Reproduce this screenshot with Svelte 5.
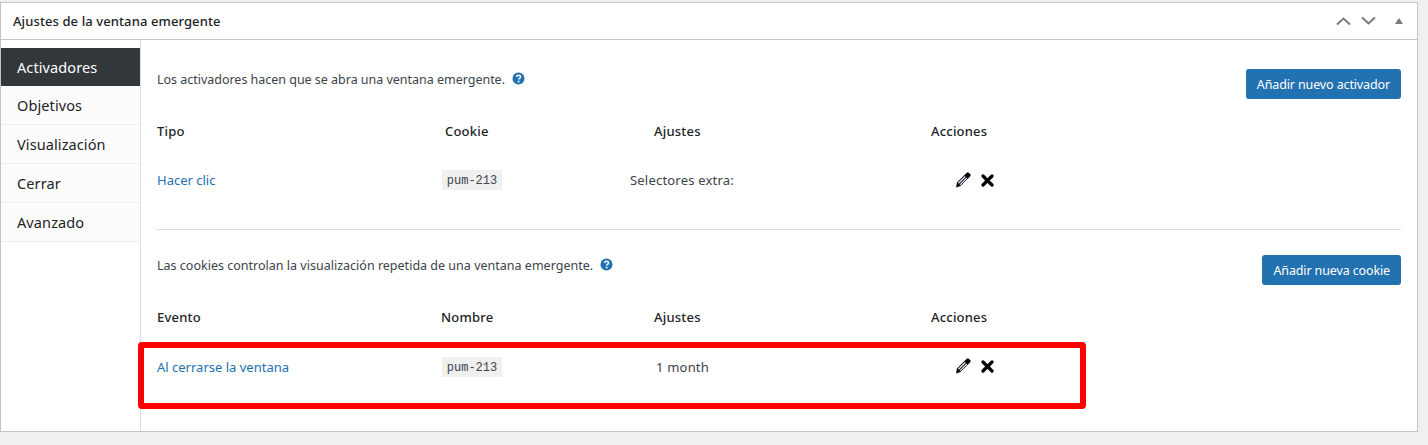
<script>
  const tabs = ['Activadores', 'Objetivos', 'Visualización', 'Cerrar', 'Avanzado']
</script>

{#snippet help()}
  <svg class="help" width="13" height="13" viewBox="0 0 13 13"><circle cx="6.500" cy="6.500" r="6" fill="#2271b1"/><path d="M4.500 5.100c0-1.200.9-1.900 2-1.900s2 .7 2 1.700c0 1.400-1.800 1.400-1.800 2.600" fill="none" stroke="#fff" stroke-width="1.500"/><rect x="5.800" y="8.700" width="1.700" height="1.700" fill="#fff"/></svg>
{/snippet}

{#snippet actions()}
  <span class="actions">
    <svg width="16" height="16" viewBox="0 0 16 16">
      <path d="M1 15.500l1-5L10.500 2l1.500-1.500h1.500l2 2V4L14 5.500 5.500 14z" fill="#000"/>
      <path d="M3 10.800 9.800 4l.9.900L3.900 11.700zM4.500 12.500l6.900-6.900.8.800L5.300 13.300z" fill="#e4edf6"/>
    </svg>
    <svg width="13" height="13" viewBox="0 0 13 13"><path d="M2 2l9 9M11 2l-9 9" stroke="#000" stroke-width="3.200" stroke-linecap="round"/></svg>
  </span>
{/snippet}

<div class="page">
  <div class="postbox">
    <div class="postbox-header">
      <h2>Ajustes de la ventana emergente</h2>
      <div class="handles">
        <svg width="15" height="10" viewBox="0 0 15 10"><path d="M1 8.500 7.500 2.500l6.500 6" fill="none" stroke="#787c82" stroke-width="2"/></svg>
        <svg width="15" height="10" viewBox="0 0 15 10"><path d="M1 1.500 7.500 7.500l6.500-6" fill="none" stroke="#787c82" stroke-width="2"/></svg>
        <svg class="toggle" width="8" height="6" viewBox="0 0 8 6"><path d="M4 0l4 6H0z" fill="#787c82"/></svg>
      </div>
    </div>

    <div class="body">
      <ul class="tabs">
        {#each tabs as tab, i}
          <li class:active={i === 0}>{tab}</li>
        {/each}
      </ul>

      <div class="panel">
        <section class="first">
          <div class="intro">
            <p>Los activadores hacen que se abra una ventana emergente. {@render help()}</p>
            <button class="btn">Añadir nuevo activador</button>
          </div>
          <div class="row head">
            <span>Tipo</span>
            <span class="c2">Cookie</span>
            <span>Ajustes</span>
            <span>Acciones</span>
          </div>
          <div class="row data">
            <a href="#trigger">Hacer clic</a>
            <code>pum-213</code>
            <span class="extra">Selectores extra:</span>
            {@render actions()}
          </div>
        </section>

        <section class="second">
          <div class="intro">
            <p>Las cookies controlan la visualización repetida de una ventana emergente. {@render help()}</p>
            <button class="btn">Añadir nueva cookie</button>
          </div>
          <div class="row head">
            <span>Evento</span>
            <span>Nombre</span>
            <span>Ajustes</span>
            <span>Acciones</span>
          </div>
          <div class="row data">
            <a href="#cookie">Al cerrarse la ventana</a>
            <code>pum-213</code>
            <span class="month">1 month</span>
            {@render actions()}
          </div>
        </section>
      </div>
    </div>

    <div class="highlight"></div>
  </div>
</div>

<style>
  :global(body) {
    margin: 0;
    background: #f0f0f1;
  }

  .page {
    height: 445px;
    padding-top: 2px;
    box-sizing: border-box;
    font-family: "Noto Sans", "Open Sans", sans-serif;
    font-size: 13px;
    color: #3c434a;
    overflow: hidden;
  }

  .postbox {
    position: relative;
    width: 1418px;
    height: 430px;
    box-sizing: border-box;
    background: #fff;
    border: 1px solid #c3c4c7;
  }

  .postbox-header {
    height: 36px;
    display: flex;
    align-items: center;
    justify-content: space-between;
    border-bottom: 1px solid #c3c4c7;
  }

  h2 {
    margin: 0 0 0 12px;
    font-size: 13px;
    font-weight: 500;
    color: #1d2327;
    letter-spacing: 0.1px;
  }

  .handles {
    display: flex;
    align-items: center;
    gap: 10px;
    margin-right: 14px;
    padding-bottom: 1px;
  }

  .toggle {
    margin-left: 9px;
  }

  .body {
    display: flex;
    height: 391px;
  }

  .tabs {
    width: 139px;
    flex-shrink: 0;
    margin: 0;
    padding: 8px 0 0;
    list-style: none;
    border-right: 1px solid #dcdcde;
    font-size: 14.500px;
    color: #1d2327;
  }

  .tabs li {
    height: 39px;
    box-sizing: border-box;
    padding-left: 16px;
    line-height: 39px;
    background: #fcfcfc;
    border-bottom: 1px solid #f0f0f1;
    letter-spacing: 0.1px;
  }

  .tabs li.active {
    height: 38px;
    line-height: 38px;
    background: #32373c;
    color: #fff;
    border-bottom: 0;
  }

  .panel {
    flex: 1;
    padding: 0 16px;
    min-width: 0;
  }

  section.first {
    height: 190px;
    border-bottom: 1px solid #dcdcde;
    box-sizing: border-box;
    padding-top: 29px;
  }

  section.second {
    padding-top: 25px;
  }

  .intro {
    display: flex;
    justify-content: space-between;
    height: 30px;
  }

  .intro p {
    margin: 2px 0 0;
    font-size: 12.500px;
    letter-spacing: 0.01px;
    line-height: 18px;
  }

  .first .intro p {
    letter-spacing: -0.02px;
  }

  .help {
    margin-left: 4px;
    vertical-align: -1px;
  }

  .btn {
    height: 30px;
    padding: 0 11px;
    border: 0;
    border-radius: 3px;
    background: #2271b1;
    color: #fff;
    font: inherit;
    font-size: 12.500px;
    letter-spacing: -0.13px;
  }

  .row {
    display: grid;
    grid-template-columns: 284px 213px 277px auto;
    align-items: center;
  }

  .head {
    margin-top: 22px;
    height: 20px;
    font-weight: 500;
    color: #1d2327;
    letter-spacing: 0.2px;
  }

  .head .c2 {
    margin-left: 4px;
  }

  .data {
    margin-top: 29px;
    height: 20px;
    letter-spacing: 0.2px;
  }

  .second .data {
    margin-top: 30px;
  }

  .second .actions {
    margin-top: -2px;
  }

  .data a {
    color: #2271b1;
    text-decoration: none;
    letter-spacing: 0;
  }

  code {
    width: 60px;
    height: 20px;
    box-sizing: border-box;
    padding-top: 4px;
    text-align: center;
    background: #f0f0f1;
    font-family: "Liberation Mono", monospace;
    font-size: 12px;
    letter-spacing: 0;
    color: #3c434a;
    margin-left: 1px;
  }

  .extra {
    margin-left: -24px;
  }

  .month {
    margin-left: 2px;
  }

  .actions {
    display: flex;
    align-items: center;
    gap: 10px;
    margin-left: 24px;
  }

  .highlight {
    position: absolute;
    left: 137px;
    top: 339px;
    width: 948px;
    height: 67px;
    box-sizing: border-box;
    border: 6px solid #f00;
    border-radius: 4px;
    pointer-events: none;
  }
</style>
